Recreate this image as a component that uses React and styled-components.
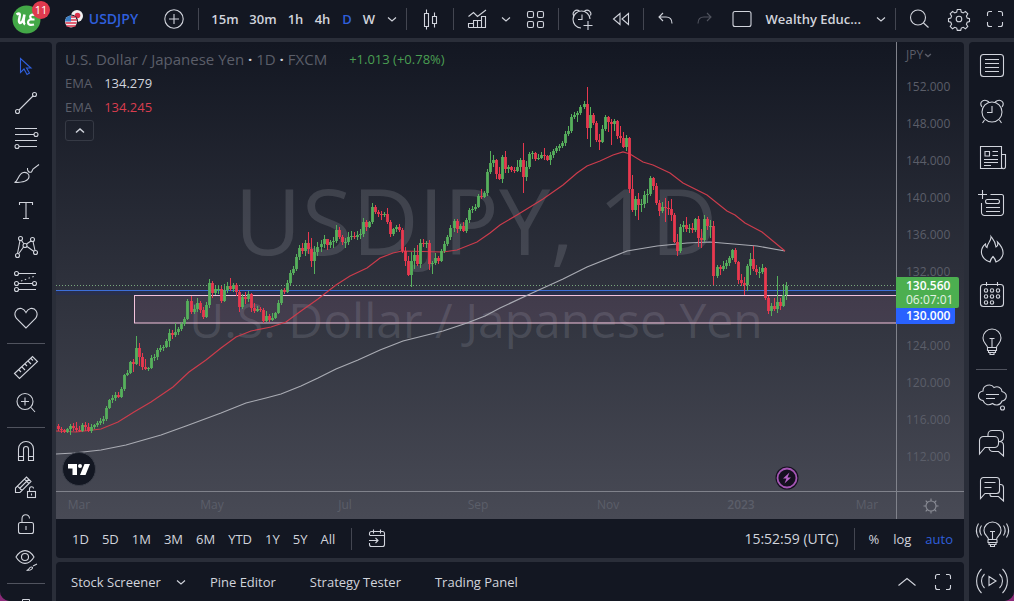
import styled, { createGlobalStyle } from 'styled-components';

const GlobalStyle = createGlobalStyle`
  * {
    box-sizing: border-box;
  }
  body {
    margin: 0;
    background: #8a2a78;
    font-family: 'Open Sans', 'Noto Sans', sans-serif;
    font-size: 13px;
    line-height: 16px;
    color: #d1d4dc;
  }
`;

const GREEN = '#56b05c';
const RED = '#e8384f';

// [high, low, close] per daily bar, in chart units. A bar opens at the previous close.
const FIRST_OPEN = 384;
const BARS = [
  [382, 389, 387], [385, 391, 388], [387, 391, 390], [386, 391, 387], [382, 393, 384],
  [381, 389, 386], [380, 390, 388], [384, 390, 389], [381, 390, 383], [380, 389, 385],
  [381, 390, 389], [382, 391, 385], [382, 387, 383], [379, 385, 381], [376, 383, 379],
  [374, 382, 377], [364, 379, 366], [357, 367, 358], [353, 361, 356], [350, 359, 353],
  [350, 356, 355], [345, 356, 347], [332, 349, 333], [328, 334, 331], [319, 332, 320],
  [317, 330, 322], [294, 323, 306], [301, 324, 315], [311, 328, 325], [317, 328, 327],
  [325, 329, 326], [313, 327, 316], [312, 319, 315], [306, 318, 308], [303, 310, 306],
  [303, 309, 305], [297, 306, 299], [287, 305, 291], [288, 297, 293], [281, 295, 290],
  [285, 293, 287], [280, 289, 282], [275, 284, 277], [257, 278, 259], [254, 272, 270],
  [263, 272, 267], [256, 270, 261], [259, 271, 268], [265, 277, 275], [260, 276, 263],
  [237, 266, 241], [239, 256, 251], [244, 253, 247], [243, 252, 247], [244, 261, 259],
  [242, 260, 248], [240, 251, 244], [236, 249, 247], [241, 250, 243], [241, 254, 250],
  [248, 270, 265], [252, 267, 255], [250, 262, 257], [249, 260, 252], [251, 270, 266],
  [261, 271, 269], [264, 270, 267], [265, 270, 268], [266, 281, 279], [269, 280, 274],
  [272, 280, 278], [271, 279, 276], [270, 277, 271], [258, 272, 261], [247, 263, 248],
  [246, 252, 250], [238, 251, 241], [228, 243, 231], [224, 233, 227], [212, 229, 215],
  [203, 218, 206], [201, 212, 209], [198, 214, 201], [190, 212, 207], [196, 225, 219],
  [204, 232, 210], [200, 214, 205], [198, 210, 202], [193, 206, 197], [199, 208, 203],
  [198, 206, 200], [195, 206, 199], [183, 201, 188], [185, 197, 195], [193, 203, 200],
  [196, 206, 200], [190, 203, 195], [189, 198, 194], [190, 197, 195], [189, 198, 193],
  [187, 197, 192], [176, 195, 180], [178, 189, 185], [179, 186, 180], [161, 182, 165],
  [163, 172, 170], [168, 175, 172], [169, 178, 173], [170, 175, 172], [166, 182, 180],
  [178, 195, 192], [186, 194, 187], [183, 190, 185], [182, 190, 188], [186, 211, 209],
  [205, 224, 219], [214, 234, 233], [210, 245, 219], [206, 227, 213], [203, 224, 222],
  [197, 226, 201], [197, 205, 202], [199, 206, 201], [198, 228, 222], [219, 232, 221],
  [211, 223, 216], [214, 222, 219], [207, 220, 209], [199, 211, 202], [193, 204, 195],
  [183, 198, 186], [177, 190, 179], [177, 191, 187], [182, 189, 184], [180, 190, 189],
  [176, 191, 178], [166, 181, 168], [164, 171, 167], [162, 169, 165], [152, 166, 154],
  [147, 157, 155], [149, 156, 151], [127, 154, 130], [109, 132, 121], [113, 125, 118],
  [117, 137, 132], [125, 138, 137], [113, 141, 115], [109, 131, 127], [123, 131, 125],
  [124, 130, 128], [125, 131, 129], [118, 130, 125], [116, 130, 118], [101, 151, 135],
  [119, 139, 125], [110, 127, 112], [109, 117, 111], [110, 119, 117], [112, 118, 116],
  [110, 117, 113], [106, 118, 114], [113, 119, 118], [110, 123, 113], [107, 116, 109],
  [104, 111, 106], [102, 109, 104], [99, 106, 101], [89, 104, 92], [84, 94, 89],
  [72, 91, 75], [70, 77, 73], [69, 80, 71], [63, 73, 65], [59, 67, 62],
  [45, 97, 86], [65, 105, 73], [71, 83, 81], [79, 100, 98], [92, 108, 100],
  [83, 101, 87], [73, 89, 75], [74, 90, 80], [77, 103, 82], [77, 89, 79],
  [78, 97, 94], [84, 101, 96], [90, 106, 105], [93, 109, 96], [95, 151, 147],
  [133, 170, 168], [154, 174, 157], [151, 178, 163], [157, 170, 162], [149, 166, 153],
  [147, 161, 152], [134, 154, 136], [135, 148, 144], [141, 163, 161], [158, 174, 169],
  [160, 171, 165], [156, 180, 166], [159, 173, 167], [157, 179, 173], [171, 201, 200],
  [192, 214, 209], [182, 211, 185], [179, 190, 183], [175, 190, 187], [182, 191, 186],
  [181, 191, 188], [176, 190, 177], [174, 205, 196], [187, 206, 198], [173, 200, 177],
  [175, 188, 184], [178, 196, 184], [179, 243, 234], [223, 236, 225], [223, 233, 227],
  [219, 229, 224], [218, 227, 221], [214, 224, 216], [207, 218, 208], [206, 222, 220],
  [219, 242, 238], [232, 244, 241], [235, 253, 243], [222, 249, 224], [211, 233, 217],
  [204, 229, 227], [223, 233, 230], [225, 236, 230], [222, 232, 226], [225, 258, 256],
  [254, 272, 269], [261, 274, 264], [256, 269, 267], [234, 271, 260], [256, 268, 264],
  [242, 265, 253], [240, 258, 244],
];

const FAST_EMA =
  '0,389 20,390 45,387 62,380 78,370 95,360 117,345 133,330 150,318 165,306 180,295 195,289 215,285 230,280 245,269 262,257 280,243 294,234 311,226 324,216 337,211 346,209 387,210 401,208 421,200 434,191 444,183 461,173 487,157 507,143 521,131 531,124 544,119 557,113 567,110 574,112 587,120 597,123 614,131 627,141 651,153 671,169 679,173 689,181 706,190 729,209';
const SLOW_EMA =
  '0,412 18,411 45,408 70,403 105,393 130,384 165,371 190,361 210,356 225,352 245,344 262,336 280,327 302,318 324,308 347,299 387,289 411,281 429,274 444,266 474,252 507,237 531,225 571,209 601,204 631,201 654,200 701,204 729,209';

const PRICES = ['152.000', '148.000', '144.000', '140.000', '136.000', '132.000', '', '124.000', '120.000', '116.000', '112.000'];
const TICKS = [
  { label: 'Mar', span: 133 },
  { label: 'May', span: 133 },
  { label: 'Jul', span: 133 },
  { label: 'Sep', span: 130 },
  { label: 'Nov', span: 133 },
  { label: '2023', span: 126 },
  { label: 'Mar', span: 29 },
];
const INTERVALS = [
  ['15m', 38],
  ['30m', 38],
  ['1h', 27],
  ['4h', 27],
  ['D', 22],
  ['W', 22],
];
const RANGES = ['1D', '5D', '1M', '3M', '6M', 'YTD', '1Y', '5Y', 'All'];

const ICONS = {
  plus: <><circle cx="14" cy="14" r="9.2" /><path d="M14 9v10M9 14h10" /></>,
  candles: <path d="M8.5 8.5h4v13h-4zM10.500 4.500v4M10.500 21.500v3M16.500 11.500h4v7h-4zM18.500 7.500v4M18.500 18.500v4" />,
  indicators: <path d="M5.500 22.500h17v-11h-4v11M18.500 15.500h-4v7M14.500 18.500v-3h-4v7M10.500 18.500h-5v4M5.500 11.500l5-4 4 4 8.500-6.500" />,
  grid: <><rect x="6.500" y="6.500" width="6" height="6" rx="1.500" /><rect x="16.500" y="6.500" width="6" height="6" rx="1.500" /><rect x="6.500" y="16.500" width="6" height="6" rx="1.500" /><rect x="16.500" y="16.500" width="6" height="6" rx="1.500" /></>,
  alertAdd: <><path d="M22 14a8.500 8.500 0 1 0-9 9M14 9.500v5h-4M5.500 10.500c-1.500-3 2-7 6-4.500M22.500 10.500c1.500-3-2-7-6-4.500" /><path d="M20 16v9M15.500 20.500h9" /></>,
  rewind: <path d="M10 8.500v11L3.500 14zM18.500 8.500v11L12 14z" />,
  undo: <path d="M11 8l-4 4 4 4M7.500 12h6.500c4 0 6 2 6 6.500" />,
  redo: <path d="M17 8l4 4-4 4M20.500 12H14c-4 0-6 2-6 6.500" />,
  square: <rect x="5" y="6.500" width="18" height="15" rx="2" />,
  search: <><circle cx="13" cy="12.500" r="7.500" /><path d="M18.500 18l5 4.500" /></>,
  gear: <><circle cx="14" cy="14" r="2.800" /><path d="M12.300 4.500h3.400l.6 2.600 1.900.8 2.300-1.500 2.300 2.400-1.400 2.300.8 1.900 2.300.6v3l-2.300.6-.8 2 1.400 2.200-2.300 2.400-2.300-1.500-1.900.8-.6 2.300h-3.400l-.6-2.300-1.900-.8-2.300 1.500-2.300-2.400 1.400-2.200-.8-2-2.300-.6v-3l2.300-.6.8-1.900-1.400-2.300 2.300-2.400 2.300 1.500 1.900-.8z" /></>,
  fullscreen: <path d="M6.500 11V8.500a2 2 0 0 1 2-2H11M17 6.500h2.500a2 2 0 0 1 2 2V11M21.500 17v2.500a2 2 0 0 1-2 2H17M11 21.500H8.500a2 2 0 0 1-2-2V17" />,
  cursor: <path d="M8.500 5.500v14l3.500-3.500 3 5.500 2.500-1.500-3-5h4.500z" />,
  trend: <><circle cx="5.500" cy="22.500" r="2" /><circle cx="22.500" cy="5.500" r="2" /><path d="M7 21L21 7" /></>,
  fib: <><path d="M3 3.500h22M3 9.500h19M3 15.500h22M7 21.500h18" /><circle cx="24" cy="9.500" r="2" /><circle cx="5" cy="21.500" r="2" /></>,
  brush: <path d="M2.500 21.500c4-1 3.500-9 9-10 3-.5 6 1.500 5.500 4.500-.5 4-5 5.500-14.500 5.500zM15.500 7c-.5 3 1.500 5 4 4l1.500-3 6-4.500" />,
  text: <path d="M7.500 8V5.500h13V8M14 5.500v16M11 21.500h6" />,
  pattern: <><circle cx="8.500" cy="5.500" r="2" /><circle cx="20.500" cy="6.500" r="2" /><circle cx="13" cy="12.500" r="2" /><circle cx="5.500" cy="22.500" r="2" /><circle cx="23.500" cy="19.500" r="2" /><path d="M8 7.500l-2.500 13M9.500 7.500l2.500 3.500M14.500 11L19 8M11.500 14l-5 7M21 8.500l2 9M15 13.500l7 5" /></>,
  prediction: <><circle cx="4.500" cy="4.500" r="2" /><circle cx="4.500" cy="14.500" r="2" /><circle cx="22.500" cy="14.500" r="2" /><circle cx="4.500" cy="20.500" r="2" /><path d="M7 4.500h17M7 14.500h13M7 20.500h17" /><path d="M9 12l14-5" strokeDasharray="1.500 2.500" /></>,
  heart: <path d="M14 23L4.500 13.500C.5 8 5 2.500 9.500 3.500c2.500.5 4 3 4.500 4 .5-1 2-3.500 4.500-4 4.500-1 9 4.500 5 10z" />,
  ruler: <path d="M2.500 20.500l18-17 5 5-18 17zM7 17l2 2M10 14l3 3M13 11l2 2M16 8l3 3M19 5.500l2 2" />,
  zoomIn: <><circle cx="13" cy="12.500" r="8" /><path d="M19 18.500l4 4.500M13 8.500v8M9 12.500h8" /></>,
  magnet: <path d="M6.500 23.500V12a7.500 7.500 0 0 1 15 0v11.500h-5V12a2.500 2.500 0 0 0-5 0v11.500zM6.500 19.500h5M16.500 19.500h5" />,
  pencilLock: <><path d="M3.500 19.500v-4.500l11-11 4.500 4.500-11 11zM5.500 13l4.500 4.500M8 15L17 6M12.500 6l4 4" /><rect x="15.500" y="18.500" width="8" height="6" /><path d="M17.500 18.500V16c0-3 4-3 4-.5M19.500 20.500v2" /></>,
  lock: <><rect x="6.500" y="13.500" width="15" height="11" rx="2" /><path d="M10 13.500V10c0-5.500 7.500-5.500 7.500-.5M14 17v4" /></>,
  eye: <><path d="M4 12c5-8.500 13-8.500 18 0-5 8.500-13 8.500-18 0z" /><circle cx="13" cy="12" r="3.500" /><path d="M14.500 25.500c3 0 2-3.500 5-3.500 2 0 1.500 3.500-5 3.500zM21 21l4-2" /></>,
  list: <><rect x="2.500" y="3.500" width="23" height="22" rx="3" /><path d="M7 8.500h14M7 12.500h14M7 16.500h14M7 20.500h14" /></>,
  alarm: <><circle cx="14" cy="15" r="10" /><path d="M14 9v6.500H9M4 10C.5 5 6 1 11 5M24 10c3.500-5-2-9-7-5M6.500 23l-2 3M21.500 23l2 3" /></>,
  news: <path d="M2.500 3.500h21v22h-21zM23.500 11.500h4v12c0 3-4 3-4 0M7 8.500h4.500v4.500H7zM14.500 8.500H20M14.500 12.500H20M6 16.500h14M6 19.500h14M6 22.500h7" />,
  listAdd: <><path d="M12.500 5.500h11a2 2 0 0 1 2 2v16a3 3 0 0 1-3 3h-16a3 3 0 0 1-3-3V14M4.500 1v9M0 5.500h9" /><rect x="7.500" y="10.500" width="14" height="4" rx="2" /><path d="M8 18.500h14M8 22.500h14" /></>,
  fire: <path d="M13 1.500c1.500 2 4.500 4.500 5 10.500 1.500-.5 2-3 1.500-5 4 4 6 8 5.500 12-.5 3.500-3.500 7-7 8-.5-2-1.500-4-3-5.500-1.500 1.500-2.500 3.500-3 5.500-4.500-1-8-5-8.500-9-.5-4.500 1.500-7 4-9 0 2 .5 3 1.500 3.500 0-4.500 4.500-6 4-11z" />,
  calendar: <><rect x="2.500" y="3.500" width="23" height="22" rx="3" /><path d="M8.500 1v4M19.500 1v4" />{[8, 14, 20].map((x) => [9.5, 15.5, 21.5].map((y) => (x === 20 && y > 20 ? null : <circle key={`${x}-${y}`} cx={x} cy={y} r="1.700" />)))}</>,
  bulb: <path d="M9.500 20.500c0-3-4.500-4-4.500-9.500a9 9 0 0 1 18 0c0 5.500-4.500 6.500-4.500 9.500zM11.500 11.500h5M14 11.500v9M9.500 20.500v3h9v-3M10.500 23.500v2h7v-2M12 25.500v2h4v-2" />,
  cloud: <><path d="M5 17.500c-6-1-6-8.500 0-9.500 0-6 8-8 11-3.500 4-2 8 .5 8 4 6.500 2 5 8.500 0 9.500-1.500 4.500-6.500 5-9.500 2.500-4 2.500-8 1-9.500-3z" /><path d="M8 11.500h13M8 15.500h9" /><circle cx="24.500" cy="25" r="2" /></>,
  chats: <path d="M1.500 25V11.500a4 4 0 0 1 4-4h11a4 4 0 0 1 4 4v3a4 4 0 0 1-4 4H7zM10 7.500v-2a4 4 0 0 1 4-4h7.500a4 4 0 0 1 4 4v3a4 4 0 0 1-4.500 4M21 12.500c3 0 4.500 1.500 4.500 4V27l-5-4.500H15a4 4 0 0 1-4-4" />,
  comments: <path d="M2.500 23.500v-18a3 3 0 0 1 3-3h13a3 3 0 0 1 3 3v10a3 3 0 0 1-3 3H7zM6.500 7.500h11M6.500 12.500h7M21.500 9.500h1a3 3 0 0 1 3 3V26l-5-4.500H14a2 2 0 0 1-2-2v-1" />,
  bulbLive: <path d="M10.500 18.500c0-3-4.500-4-4.500-9a8.500 8.500 0 0 1 17 0c0 5-4.500 6-4.500 9zM12 10.500h5M14.500 10.500v8M10 18.500v3h9v-3M11 21.500v2h7v-2M12.500 23.500v2h4v-2M3.500 4.500c-2 3-2 7 0 10M.5 2.500c-3 5-3 9 0 14M25.500 4.500c2 3 2 7 0 10M28.500 2.500c3 5 3 9 0 14" />,
  stream: <path d="M11 9.500l7 4.500-7 4.500zM6.500 7c-4 4-4 10 0 14M3.500 2C-3 8.500-3 19.500 3.500 26M21.500 7c4 4 4 10 0 14M24.500 2c6.500 6.500 6.500 17.500 0 24" />,
  goto: <path d="M6.500 10V8.500a2 2 0 0 1 2-2h11a2 2 0 0 1 2 2v11a2 2 0 0 1-2 2h-11a2 2 0 0 1-2-2V18M6.500 10.500h15M10.500 4.500v4M17.500 4.500v4M6 15.500h9M12.500 13l2.500 2.500-2.500 2.500" />,
  sun: <><circle cx="14" cy="14" r="5" /><path d="M14 6.500v2.500M14 19v2.500M6.500 14H9M19 14h2.500M8.700 8.700l1.800 1.800M17.500 17.500l1.800 1.800M19.300 8.700l-1.800 1.800M10.500 17.500l-1.800 1.800" /></>,
  down: <path d="M10 12.500l4 3.500 4-3.500" />,
  up: <path d="M10 15.500l4-3.500 4 3.500" strokeWidth="1.500" />,
  upWide: <path d="M5.500 17.500L14 10.500l8.500 7" />,
};

const Icon = ({ name }) => (
  <Glyph viewBox="0 0 28 28" aria-hidden="true">
    {ICONS[name]}
  </Glyph>
);

const Chart = () => {
  let open = FIRST_OPEN;
  return (
    <Plot viewBox="0 0 840 449" preserveAspectRatio="none">
      <rect x="78.500" y="253.500" width="765" height="27.500" fill="#e58fd0" fillOpacity="0.1" stroke="#f3c3dc" />
      <rect x="0" y="249" width="840" height="4" fill="#1c2a6b" fillOpacity="0.35" />
      <path d="M0 248.500H840" stroke="#3d6fd8" />
      <path d="M0 243.500H840" stroke="#79a67c" strokeDasharray="1 2" />
      <polyline points={SLOW_EMA} fill="none" stroke="#a9abb3" strokeWidth="1.200" />
      <polyline points={FAST_EMA} fill="none" stroke="#cc3c4c" strokeWidth="1.200" />
      {BARS.map(([high, low, close], i) => {
        const x = Math.round(1.5 + i * 3.023);
        const color = close <= open ? GREEN : RED;
        const top = Math.min(open, close);
        const height = Math.max(1, Math.abs(open - close));
        open = close;
        return (
          <g key={i} fill={color}>
            <rect x={x} y={high} width="1" height={low - high} />
            <rect x={x - 1} y={top} width="3" height={height} fillOpacity="0.9" />
          </g>
        );
      })}
    </Plot>
  );
};

const Header = () => (
  <TopBar>
    <Avatar type="button" aria-label="Account">
      <svg width="29" height="29" viewBox="0 0 29 29">
        <circle cx="14.500" cy="14.500" r="14" fill="#43a847" />
        <path d="M4.500 9.500c3-2 4-1 3 3-1.500 6 1 7 3 3.500 1-2 1.500-4 2-6.500-1 5-1.500 9 .5 10" fill="none" stroke="#fff" strokeWidth="2.500" />
        <path d="M23 10c-4-1.500-6.500 1.500-3.500 4-4.500 1-5.500 7.500 2.500 5.500M17.500 14.500h5" fill="none" stroke="#fff" strokeWidth="2.200" />
      </svg>
      <Badge>11</Badge>
    </Avatar>
    <SymbolButton type="button">
      <svg width="20" height="20" viewBox="0 0 20 20">
        <circle cx="13" cy="7" r="6" fill="#f0f0f0" />
        <circle cx="13.500" cy="6.500" r="2.800" fill="#d9304a" />
        <circle cx="7" cy="12.500" r="7" fill="#131722" />
        <circle cx="7" cy="12.500" r="6" fill="#f0f0f0" />
        <path d="M1.500 14h11M2.500 17h9M7 11h6M7 8h4.500" stroke="#d9304a" strokeWidth="1.500" />
        <path d="M7 6.500v6H1a6 6 0 0 1 6-6z" fill="#3c7fc4" />
      </svg>
      USDJPY
    </SymbolButton>
    <Tool type="button" $w={48} aria-label="Compare"><Icon name="plus" /></Tool>
    <Divider />
    <Intervals>
      {INTERVALS.map(([label, w]) => (
        <Tool key={label} type="button" $w={w} $active={label === 'D'}>{label}</Tool>
      ))}
      <Tool type="button" $w={24} aria-label="More intervals"><Icon name="down" /></Tool>
    </Intervals>
    <Divider />
    <Tool type="button" $w={46} aria-label="Candles"><Icon name="candles" /></Tool>
    <Divider />
    <Tool type="button" $w={46} aria-label="Indicators"><Icon name="indicators" /></Tool>
    <Tool type="button" $w={12} aria-label="Favourite indicators"><Icon name="down" /></Tool>
    <Tool type="button" $w={46} aria-label="Templates"><Icon name="grid" /></Tool>
    <Divider />
    <Tool type="button" $w={46} aria-label="Create alert"><Icon name="alertAdd" /></Tool>
    <Tool type="button" $w={38} aria-label="Replay"><Icon name="rewind" /></Tool>
    <Divider />
    <Spacer />
    <Tool type="button" $w={38} aria-label="Undo"><Icon name="undo" /></Tool>
    <Tool type="button" $w={38} $dim aria-label="Redo"><Icon name="redo" /></Tool>
    <Tool type="button" $w={38} aria-label="Layout"><Icon name="square" /></Tool>
    <LayoutName type="button">Wealthy Educ...<Icon name="down" /></LayoutName>
    <Divider />
    <Tool type="button" $w={46} aria-label="Search"><Icon name="search" /></Tool>
    <Tool type="button" $w={34} aria-label="Settings"><Icon name="gear" /></Tool>
    <Tool type="button" $w={38} aria-label="Fullscreen"><Icon name="fullscreen" /></Tool>
  </TopBar>
);

const SideTools = ({ names, size, rule }) =>
  names.map((name, i) =>
    name ? (
      <SideButton key={name} type="button" $size={size} $active={name === 'cursor'} aria-label={name}>
        <Icon name={name} />
      </SideButton>
    ) : (
      <SideRule key={i} $size={rule} />
    )
  );

const LEFT_TOOLS = ['cursor', 'trend', 'fib', 'brush', 'text', 'pattern', 'prediction', 'heart', '', 'ruler', 'zoomIn', '', 'magnet', 'pencilLock', 'lock', 'eye', ''];
const RIGHT_TOOLS = ['list', 'alarm', 'news', 'listAdd', 'fire', 'calendar', 'bulb', '', 'cloud', 'chats', 'comments', 'bulbLive', 'stream'];

const App = () => {
  return (
    <Page>
      <GlobalStyle />
      <Header />
      <Body>
        <LeftBar>
          <SideTools names={LEFT_TOOLS} size={36} rule={12} />
          <SideButton type="button" $size={36} aria-label="Remove">
            <svg width="28" height="28" viewBox="0 0 28 28" fill="none" stroke="currentColor">
              <path d="M6 9.500h16M10.500 9V6.500h7V9M8 10l1 14h10l1-14" />
            </svg>
          </SideButton>
        </LeftBar>
        <Main>
          <ChartPanel>
            <PlotArea>
              <Watermark>
                <BigMark>USDJPY, 1D</BigMark>
                <SmallMark>U.S. Dollar / Japanese Yen</SmallMark>
              </Watermark>
              <Chart />
              <Legend>
                <LegendTitle>
                  <span>U.S. Dollar / Japanese Yen <b>·</b> 1D <b>·</b> FXCM</span>
                  <Change>+1.013 (+0.78%)</Change>
                </LegendTitle>
                <LegendRow>EMA <Value>134.279</Value></LegendRow>
                <LegendRow>EMA <Value $red>134.245</Value></LegendRow>
                <Collapse type="button" aria-label="Collapse legend"><Icon name="up" /></Collapse>
              </Legend>
              <Brand viewBox="0 0 34 34">
                <circle cx="17" cy="17" r="16.500" fill="#131722" stroke="#3a3e49" />
                <path d="M6 12h9v11h-4.500v-6.500H6z" fill="#fff" />
                <circle cx="18" cy="14" r="2" fill="#fff" />
                <path d="M22.500 12H28l-4.500 11H18z" fill="#fff" />
              </Brand>
              <Flash viewBox="0 0 24 24">
                <circle cx="12" cy="12" r="11.500" fill="#15101f" />
                <circle cx="12" cy="12" r="9.500" fill="none" stroke="#a456b4" strokeWidth="1.800" />
                <path d="M14.500 6.500L8 12.500h3.500l-2 5 6.500-6h-3.500z" fill="#b764c8" />
              </Flash>
            </PlotArea>
            <PriceAxis>
              <Currency type="button">JPY<Icon name="down" /></Currency>
              {PRICES.map((price, i) => (
                <Price key={i}>{price}</Price>
              ))}
              <PriceTags>
                <LastPrice>
                  <strong>130.560</strong>
                  <span>06:07:01</span>
                </LastPrice>
                <LinePrice>130.000</LinePrice>
              </PriceTags>
            </PriceAxis>
            <TimeAxis>
              {TICKS.map(({ label, span }, i) => (
                <Tick key={i} $span={span} $strong={label === '2023'}><span>{label}</span></Tick>
              ))}
            </TimeAxis>
            <AxisCorner type="button" aria-label="Axis settings"><Icon name="sun" /></AxisCorner>
          </ChartPanel>
          <RangeBar>
            <Ranges>
              {RANGES.map((range) => (
                <TextButton key={range} type="button">{range}</TextButton>
              ))}
            </Ranges>
            <Divider />
            <Tool type="button" $w={50} aria-label="Go to date"><Icon name="goto" /></Tool>
            <Spacer />
            <ClockButton type="button">15:52:59 (UTC)</ClockButton>
            <Divider />
            <ScaleModes>
              <TextButton type="button">%</TextButton>
              <TextButton type="button">log</TextButton>
              <TextButton type="button" $active>auto</TextButton>
            </ScaleModes>
          </RangeBar>
          <BottomPanel>
            <PanelTab type="button">Stock Screener<Icon name="down" /></PanelTab>
            <PanelTab type="button">Pine Editor</PanelTab>
            <PanelTab type="button">Strategy Tester</PanelTab>
            <PanelTab type="button">Trading Panel</PanelTab>
            <Spacer />
            <Tool type="button" $w={36} aria-label="Open panel"><Icon name="upWide" /></Tool>
            <Tool type="button" $w={36} aria-label="Maximize panel"><Icon name="fullscreen" /></Tool>
          </BottomPanel>
        </Main>
        <RightBar>
          <SideTools names={RIGHT_TOOLS} size={46} rule={10} />
        </RightBar>
      </Body>
    </Page>
  );
};

export default App;

const Page = styled.div`
  height: 100vh;
  display: flex;
  flex-direction: column;
  gap: 4px;
  overflow: hidden;
  background: #2a2e39;
  border-radius: 0 0 10px 10px;
`;
const Button = styled.button`
  display: flex;
  align-items: center;
  justify-content: center;
  flex-shrink: 0;
  padding: 0;
  border: 0;
  background: none;
  color: inherit;
  font: inherit;
  white-space: nowrap;
  cursor: pointer;
`;
const Glyph = styled.svg`
  width: 28px;
  height: 28px;
  flex-shrink: 0;
  overflow: visible;
  fill: none;
  stroke: currentColor;
  stroke-width: 1.1;
`;
const TopBar = styled.header`
  height: 38px;
  display: flex;
  align-items: center;
  flex-shrink: 0;
  background: #131722;
`;
const Avatar = styled(Button)`
  position: relative;
  width: 52px;
  height: 38px;
`;
const Badge = styled.span`
  position: absolute;
  top: 1px;
  left: 32px;
  width: 18px;
  height: 18px;
  border-radius: 9px;
  background: #e03a4e;
  color: #fff;
  font-size: 11px;
  line-height: 18px;
`;
const SymbolButton = styled(Button)`
  width: 98px;
  gap: 5px;
  color: #2f5fdc;
  font-size: 14px;
  font-weight: 600;
`;
const Tool = styled(Button)`
  width: ${({ $w }) => $w}px;
  height: 38px;
  font-weight: 600;
  color: ${({ $active, $dim }) => ($active ? '#2f5fdc' : $dim ? '#50535e' : '#d1d4dc')};
`;
const Intervals = styled.div`
  display: flex;
  padding: 0 2px 0 7px;
`;
const Divider = styled.div`
  width: 1px;
  height: 22px;
  flex-shrink: 0;
  background: #434651;
`;
const Spacer = styled.div`
  flex: 1;
`;
const LayoutName = styled(Button)`
  padding-left: 5px;
  gap: 6px;
  font-weight: 600;
`;
const Body = styled.div`
  flex: 1;
  min-height: 0;
  display: flex;
  gap: 4px;
`;
const LeftBar = styled.nav`
  width: 52px;
  flex-shrink: 0;
  padding-top: 7px;
  overflow: hidden;
  background: #131722;
  border-top-right-radius: 4px;
`;
const RightBar = styled(LeftBar)`
  width: 45px;
  margin-left: 1px;
  padding-top: 0;
  border-radius: 4px 0 0 0;
`;
const SideButton = styled(Button)`
  width: 100%;
  height: ${({ $size }) => $size}px;
  color: ${({ $active }) => ($active ? '#2f5fdc' : '#d1d4dc')};
`;
const SideRule = styled.div`
  height: ${({ $size }) => $size}px;
  margin: 0 7px;
  background: linear-gradient(#50535e, #50535e) center / 100% 1px no-repeat;
`;
const Main = styled.main`
  flex: 1;
  min-width: 0;
  display: flex;
  flex-direction: column;
`;
const ChartPanel = styled.section`
  flex: 1;
  min-height: 0;
  display: grid;
  grid-template: minmax(0, 1fr) 28px / minmax(0, 1fr) 68px;
  background: linear-gradient(#131722, #484a55);
  border-radius: 4px 4px 0 0;
`;
const PlotArea = styled.div`
  position: relative;
  overflow: hidden;
`;
const Plot = styled.svg`
  position: relative;
  display: block;
  width: 100%;
  height: 100%;
`;
const Watermark = styled.div`
  position: absolute;
  inset: 0;
  display: flex;
  flex-direction: column;
  align-items: center;
  justify-content: center;
  padding-bottom: 6px;
  color: rgba(120, 123, 134, 0.32);
  white-space: nowrap;
`;
const BigMark = styled.div`
  font-size: 92px;
  font-weight: 500;
  line-height: 112px;
`;
const SmallMark = styled.div`
  font-size: 48px;
  line-height: 88px;
`;
const Legend = styled.div`
  position: absolute;
  top: 5px;
  left: 9px;
`;
const LegendTitle = styled.div`
  display: flex;
  align-items: center;
  gap: 22px;
  height: 24px;
  font-size: 15px;
  color: #5b5e69;
  b {
    color: #d1d4dc;
  }
`;
const Change = styled.span`
  font-size: 13px;
  color: #4a9e52;
`;
const LegendRow = styled.div`
  display: flex;
  align-items: center;
  gap: 12px;
  height: 24px;
  color: #5b5e69;
`;
const Value = styled.span`
  color: ${({ $red }) => ($red ? '#d93d4e' : '#d1d4dc')};
`;
const Collapse = styled(Button)`
  width: 29px;
  height: 21px;
  margin-top: 1px;
  border: 1px solid #363a45;
  border-radius: 3px;
`;
const Brand = styled.svg`
  position: absolute;
  left: 6px;
  bottom: 5px;
  width: 34px;
`;
const Flash = styled.svg`
  position: absolute;
  left: 87%;
  bottom: 1px;
  width: 24px;
  transform: translateX(-50%);
`;
const PriceAxis = styled.div`
  position: relative;
  display: flex;
  flex-direction: column;
  padding: 4px 0 15px 9px;
  border-left: 1px solid #80828b;
  color: #5b5e69;
`;
const Currency = styled(Button)`
  align-self: flex-start;
  height: 18px;
  margin-bottom: 4px;
  font-size: 12px;
  svg {
    width: 20px;
    margin-left: -5px;
    stroke-width: 2;
  }
`;
const Price = styled.div`
  flex: 1;
  display: flex;
  align-items: center;
  font-size: 12px;
  line-height: 14px;
`;
const PriceTags = styled.div`
  position: absolute;
  top: calc(52% + 2px);
  left: -1px;
  display: flex;
  flex-direction: column;
  align-items: flex-start;
  color: #fff;
`;
const LastPrice = styled.div`
  display: flex;
  flex-direction: column;
  width: 63px;
  padding: 2px 0 1px 10px;
  border-radius: 0 2px 2px 0;
  background: #4caf50;
  font-size: 12px;
  line-height: 14px;
  strong {
    font-weight: 600;
  }
  span {
    opacity: 0.85;
  }
`;
const LinePrice = styled.div`
  width: 59px;
  padding-left: 10px;
  border-radius: 0 0 2px 0;
  background: #2962ff;
  font-size: 12px;
  font-weight: 600;
`;
const TimeAxis = styled.div`
  display: flex;
  align-items: center;
  padding: 0 0 2px 23px;
  border-top: 1px solid #80828b;
  color: #5b5e69;
  font-size: 12px;
`;
const Tick = styled.div`
  flex: ${({ $span }) => $span} 0 0;
  min-width: 0;
  font-weight: ${({ $strong }) => ($strong ? 600 : 400)};
  span {
    display: inline-block;
    transform: translateX(-50%);
  }
`;
const AxisCorner = styled(Button)`
  border-top: 1px solid #80828b;
  border-left: 1px solid #80828b;
  color: #8a8c95;
`;
const RangeBar = styled.div`
  display: flex;
  align-items: center;
  height: 39px;
  padding-left: 16px;
  background: #131722;
  border-radius: 0 0 4px 4px;
`;
const Ranges = styled.div`
  display: flex;
  gap: 13px;
  padding-right: 16px;
`;
const TextButton = styled(Button)`
  height: 28px;
  color: ${({ $active }) => ($active ? '#2f5fdc' : '#d1d4dc')};
`;
const ClockButton = styled(TextButton)`
  padding-right: 16px;
  font-size: 14px;
`;
const ScaleModes = styled.div`
  display: flex;
  gap: 14px;
  padding: 0 11px 0 13px;
`;
const BottomPanel = styled.div`
  display: flex;
  align-items: center;
  height: 39px;
  margin-top: 4px;
  padding-right: 3px;
  background: #131722;
  border-radius: 4px 4px 0 0;
`;
const PanelTab = styled(Button)`
  height: 38px;
  padding: 0 19px 0 15px;
  svg {
    margin: 0 -19px 0 6px;
  }
`;
